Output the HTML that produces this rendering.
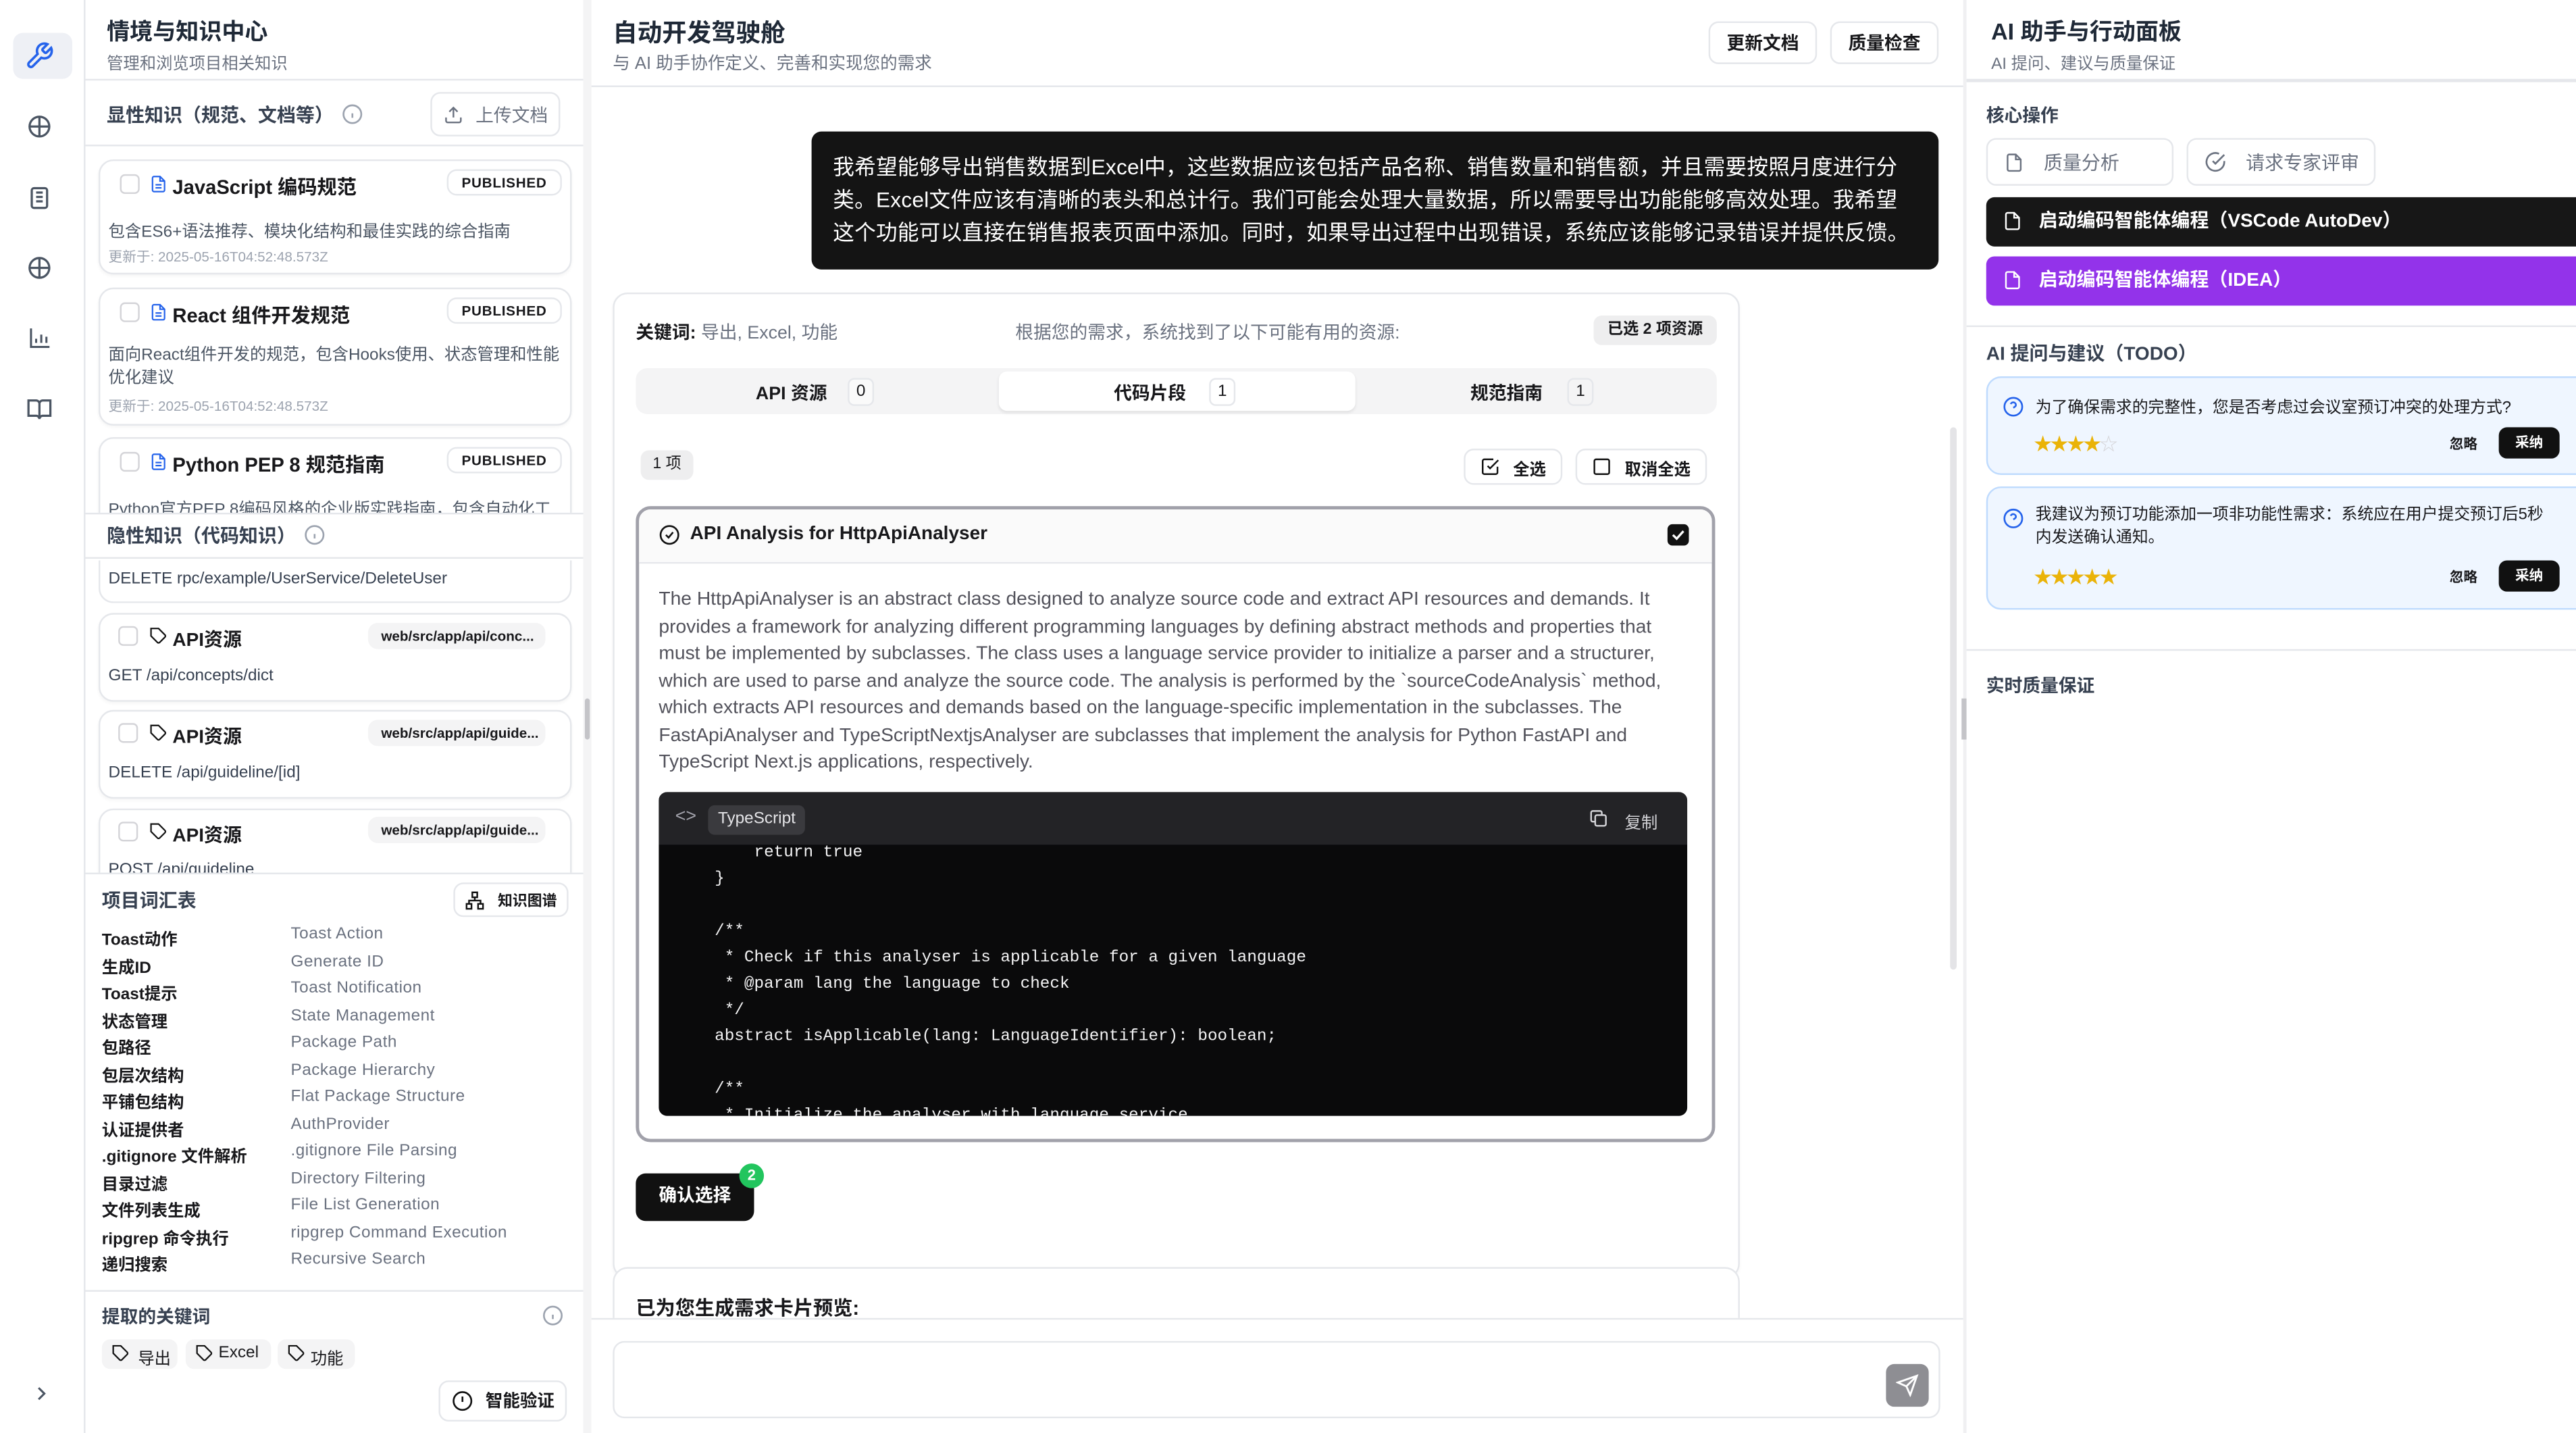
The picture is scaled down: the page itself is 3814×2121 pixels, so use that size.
<!DOCTYPE html>
<html><head><meta charset="utf-8">
<style>
*{box-sizing:border-box;margin:0;padding:0}
html,body{width:3814px;height:2120px;overflow:hidden;background:#fff}
#w{position:absolute;left:0;top:0;width:1568px;height:872px;transform:scale(2.43240);transform-origin:0 0;font-family:"Liberation Sans","Noto Sans CJK SC",sans-serif;color:#18181b;overflow:hidden}
.a{position:absolute}
.t{white-space:nowrap}
.b{font-weight:700}
.g{color:#6b7280}
.card{position:absolute;border:1px solid #e5e7eb;border-radius:9px;background:#fff;box-shadow:0 1px 2px rgba(0,0,0,.04)}
.btn{position:absolute;border:1px solid #e5e7eb;border-radius:6px;background:#fff;font-size:11px;display:flex;align-items:center;justify-content:center;gap:8px;white-space:nowrap}
.cb{position:absolute;width:12px;height:12px;border:1px solid #d4d4d8;border-radius:3px;background:#fff}
.pub{position:absolute;border:1px solid #e5e7eb;border-radius:6px;font-size:8.5px;font-weight:700;padding:2px 8px;letter-spacing:.3px}
.path{position:absolute;background:#f4f4f5;border-radius:6px;font-size:8.5px;font-weight:700;padding:3px 8px;width:108px;white-space:nowrap;overflow:hidden}
.hl{position:absolute;height:1px;background:#e5e7eb}
svg{position:absolute}
.row{position:absolute;left:62px;font-size:10px;white-space:nowrap}
.row span{position:absolute;left:115px;color:#6b7280;letter-spacing:.2px}
pre{font-family:"Liberation Mono",monospace;font-size:10px;line-height:16px;color:#f4f4f5}
</style></head><body><div id="w">

<!-- icon rail -->
<div class="a" style="left:0;top:0;width:52px;height:872px;background:#fff;border-right:1px solid #e5e7eb"></div>
<div class="a" style="left:8px;top:20px;width:36px;height:28px;border-radius:6px;background:#eef0f5"></div>
<svg style="left:15px;top:25px" width="18" height="18" viewBox="0 0 24 24" fill="none" stroke="#2563eb" stroke-width="2" stroke-linecap="round"><path d="M14.7 6.3a1 1 0 000 1.4l1.6 1.6a1 1 0 001.4 0l3.77-3.77a6 6 0 01-7.940 7.94l-6.91 6.91a2.12 2.12 0 01-3-3l6.91-6.91a6 6 0 017.94-7.94l-3.76 3.76z"/></svg>
<svg style="left:16px;top:69px" width="16" height="16" viewBox="0 0 24 24" fill="none" stroke="#4b5563" stroke-width="2"><circle cx="12" cy="12" r="9"/><path d="M12 3v18M3 12h18"/></svg>
<svg style="left:16px;top:112px" width="16" height="17" viewBox="0 0 24 24" fill="none" stroke="#4b5563" stroke-width="2"><rect x="5" y="3" width="14" height="18" rx="2"/><path d="M9 7h6M9 11h6M9 15h6"/></svg>
<svg style="left:16px;top:155px" width="16" height="16" viewBox="0 0 24 24" fill="none" stroke="#4b5563" stroke-width="2"><circle cx="12" cy="12" r="9"/><path d="M12 3v18M3 12h18"/></svg>
<svg style="left:17px;top:198px" width="15" height="15" viewBox="0 0 24 24" fill="none" stroke="#4b5563" stroke-width="2"><path d="M3 3v18h18M8 17v-4M13 17V9M18 17v-6"/></svg>
<svg style="left:16px;top:241px" width="16" height="16" viewBox="0 0 24 24" fill="none" stroke="#4b5563" stroke-width="2"><path d="M2 4h7a3 3 0 013 3v14a3 3 0 00-3-3H2zM22 4h-7a3 3 0 00-3 3v14a3 3 0 013-3h7z"/></svg>
<svg style="left:19px;top:842px" width="12" height="12" viewBox="0 0 24 24" fill="none" stroke="#4b5563" stroke-width="2.5"><path d="M9 5l7 7-7 7"/></svg>

<!-- left panel -->
<div class="a" style="left:355px;top:0;width:5px;height:872px;background:#f4f4f5"></div>
<div class="a" style="left:356px;top:425px;width:3px;height:25px;background:#c4c4c8;border-radius:2px"></div>
<div class="a t b" style="left:65px;top:9px;font-size:14px;color:#1f2937">情境与知识中心</div>
<div class="a t g" style="left:65px;top:30px;font-size:10px">管理和浏览项目相关知识</div>
<div class="hl" style="left:52px;top:48px;width:303px"></div>
<div class="a t b" style="left:65px;top:62px;font-size:11.5px;color:#374151">显性知识（规范、文档等）</div>
<svg style="left:208px;top:63px" width="13" height="13" viewBox="0 0 24 24" fill="none" stroke="#9ca3af" stroke-width="2"><circle cx="12" cy="12" r="10"/><path d="M12 16v-5M12 8h.01"/></svg>
<div class="btn" style="left:262px;top:56px;width:79px;height:27px;color:#6b7280"><svg style="position:static" width="12" height="12" viewBox="0 0 24 24" fill="none" stroke="#6b7280" stroke-width="2"><path d="M21 15v4a2 2 0 01-2 2H5a2 2 0 01-2-2v-4M17 8l-5-5-5 5M12 3v12"/></svg>上传文档</div>
<div class="hl" style="left:52px;top:88px;width:303px"></div>

<div class="card" style="left:60px;top:97px;width:288px;height:70px"></div>
<div class="cb" style="left:73px;top:106px"></div>
<svg style="left:91px;top:106px" width="11" height="12" viewBox="0 0 24 24" fill="none" stroke="#2563eb" stroke-width="2"><path d="M14 2H6a2 2 0 00-2 2v16a2 2 0 002 2h12a2 2 0 002-2V8zM14 2v6h6M8 13h8M8 17h8"/></svg>
<div class="a t b" style="left:105px;top:105px;font-size:12px">JavaScript 编码规范</div>
<div class="pub" style="left:272px;top:103px">PUBLISHED</div>
<div class="a t" style="left:66px;top:132px;font-size:10px;color:#4b5563">包含ES6+语法推荐、模块化结构和最佳实践的综合指南</div>
<div class="a t" style="left:66px;top:150px;font-size:8.5px;color:#9ca3af">更新于: 2025-05-16T04:52:48.573Z</div>

<div class="card" style="left:60px;top:175px;width:288px;height:84px"></div>
<div class="cb" style="left:73px;top:184px"></div>
<svg style="left:91px;top:184px" width="11" height="12" viewBox="0 0 24 24" fill="none" stroke="#2563eb" stroke-width="2"><path d="M14 2H6a2 2 0 00-2 2v16a2 2 0 002 2h12a2 2 0 002-2V8zM14 2v6h6M8 13h8M8 17h8"/></svg>
<div class="a t b" style="left:105px;top:183px;font-size:12px">React 组件开发规范</div>
<div class="pub" style="left:272px;top:181px">PUBLISHED</div>
<div class="a" style="left:66px;top:210px;width:280px;font-size:10px;line-height:14px;color:#4b5563">面向React组件开发的规范，包含Hooks使用、状态管理和性能优化建议</div>
<div class="a t" style="left:66px;top:241px;font-size:8.5px;color:#9ca3af">更新于: 2025-05-16T04:52:48.573Z</div>

<div class="card" style="left:60px;top:266px;width:288px;height:70px"></div>
<div class="cb" style="left:73px;top:275px"></div>
<svg style="left:91px;top:275px" width="11" height="12" viewBox="0 0 24 24" fill="none" stroke="#2563eb" stroke-width="2"><path d="M14 2H6a2 2 0 00-2 2v16a2 2 0 002 2h12a2 2 0 002-2V8zM14 2v6h6M8 13h8M8 17h8"/></svg>
<div class="a t b" style="left:105px;top:274px;font-size:12px">Python PEP 8 规范指南</div>
<div class="pub" style="left:272px;top:272px">PUBLISHED</div>
<div class="a t" style="left:66px;top:301px;font-size:10px;color:#4b5563">Python官方PEP 8编码风格的企业版实践指南，包含自动化工</div>

<div class="a" style="left:52px;top:312px;width:303px;height:28px;background:#fff;border-top:1px solid #e5e7eb;border-bottom:1px solid #e5e7eb"></div>
<div class="a t b" style="left:65px;top:318px;font-size:11.5px;color:#374151">隐性知识（代码知识）</div>
<svg style="left:185px;top:319px" width="13" height="13" viewBox="0 0 24 24" fill="none" stroke="#9ca3af" stroke-width="2"><circle cx="12" cy="12" r="10"/><path d="M12 16v-5M12 8h.01"/></svg>

<div class="a" style="left:60px;top:341px;width:288px;height:26px;border:1px solid #e5e7eb;border-top:none;border-radius:0 0 9px 9px"></div>
<div class="a t" style="left:66px;top:347px;font-size:10px;color:#374151">DELETE rpc/example/UserService/DeleteUser</div>

<div class="card" style="left:60px;top:373px;width:288px;height:54px"></div>
<div class="cb" style="left:72px;top:381px"></div>
<svg style="left:91px;top:381px" width="11" height="12" viewBox="0 0 24 24" fill="none" stroke="#111" stroke-width="2"><path d="M20.6 13.4l-7.2 7.2a2 2 0 01-2.8 0L2 12V2h10l8.6 8.6a2 2 0 010 2.8zM7 7h.01"/></svg>
<div class="a t b" style="left:105px;top:381px;font-size:11.5px">API资源</div>
<div class="path" style="left:224px;top:379px">web/src/app/api/conc...</div>
<div class="a t" style="left:66px;top:406px;font-size:10px;color:#374151">GET /api/concepts/dict</div>

<div class="card" style="left:60px;top:432px;width:288px;height:54px"></div>
<div class="cb" style="left:72px;top:440px"></div>
<svg style="left:91px;top:440px" width="11" height="12" viewBox="0 0 24 24" fill="none" stroke="#111" stroke-width="2"><path d="M20.6 13.4l-7.2 7.2a2 2 0 01-2.8 0L2 12V2h10l8.6 8.6a2 2 0 010 2.8zM7 7h.01"/></svg>
<div class="a t b" style="left:105px;top:440px;font-size:11.5px">API资源</div>
<div class="path" style="left:224px;top:438px">web/src/app/api/guide...</div>
<div class="a t" style="left:66px;top:465px;font-size:10px;color:#374151">DELETE /api/guideline/[id]</div>

<div class="card" style="left:60px;top:492px;width:288px;height:54px"></div>
<div class="cb" style="left:72px;top:500px"></div>
<svg style="left:91px;top:500px" width="11" height="12" viewBox="0 0 24 24" fill="none" stroke="#111" stroke-width="2"><path d="M20.6 13.4l-7.2 7.2a2 2 0 01-2.8 0L2 12V2h10l8.6 8.6a2 2 0 010 2.8zM7 7h.01"/></svg>
<div class="a t b" style="left:105px;top:500px;font-size:11.5px">API资源</div>
<div class="path" style="left:224px;top:497px">web/src/app/api/guide...</div>
<div class="a t" style="left:66px;top:524px;font-size:10px;color:#374151">POST /api/guideline</div>

<div class="a" style="left:52px;top:531px;width:303px;height:341px;background:#fff;border-top:1px solid #e5e7eb"></div>
<div class="a t b" style="left:62px;top:540px;font-size:11.5px;color:#374151">项目词汇表</div>
<div class="btn" style="left:276px;top:537px;width:70px;height:21px;font-size:9px;font-weight:700"><svg style="position:static" width="12" height="12" viewBox="0 0 24 24" fill="none" stroke="#111" stroke-width="2"><rect x="9" y="2" width="6" height="6"/><rect x="2" y="16" width="6" height="6"/><rect x="16" y="16" width="6" height="6"/><path d="M5 16v-4h14v4M12 12V8"/></svg>知识图谱</div>
<div class="row b" style="top:563px">Toast动作<span style="font-weight:400">Toast Action</span></div>
<div class="row b" style="top:579.5px">生成ID<span style="font-weight:400">Generate ID</span></div>
<div class="row b" style="top:596px">Toast提示<span style="font-weight:400">Toast Notification</span></div>
<div class="row b" style="top:612.5px">状态管理<span style="font-weight:400">State Management</span></div>
<div class="row b" style="top:629px">包路径<span style="font-weight:400">Package Path</span></div>
<div class="row b" style="top:645.5px">包层次结构<span style="font-weight:400">Package Hierarchy</span></div>
<div class="row b" style="top:662px">平铺包结构<span style="font-weight:400">Flat Package Structure</span></div>
<div class="row b" style="top:678.5px">认证提供者<span style="font-weight:400">AuthProvider</span></div>
<div class="row b" style="top:695px">.gitignore 文件解析<span style="font-weight:400">.gitignore File Parsing</span></div>
<div class="row b" style="top:711.5px">目录过滤<span style="font-weight:400">Directory Filtering</span></div>
<div class="row b" style="top:728px">文件列表生成<span style="font-weight:400">File List Generation</span></div>
<div class="row b" style="top:744.5px">ripgrep 命令执行<span style="font-weight:400">ripgrep Command Execution</span></div>
<div class="row b" style="top:761px">递归搜索<span style="font-weight:400">Recursive Search</span></div>
<div class="hl" style="left:52px;top:785px;width:303px"></div>
<div class="a t b" style="left:62px;top:793px;font-size:11px;color:#374151">提取的关键词</div>
<svg style="left:330px;top:794px" width="13" height="13" viewBox="0 0 24 24" fill="none" stroke="#9ca3af" stroke-width="2"><circle cx="12" cy="12" r="10"/><path d="M12 16v-5M12 8h.01"/></svg>
<div class="a t" style="left:62px;top:815px;width:46px;height:18px;background:#f4f4f5;border-radius:5px;font-size:10px;padding:3px 0 0 22px">导出</div>
<div class="a t" style="left:113px;top:815px;width:52px;height:18px;background:#f4f4f5;border-radius:5px;font-size:10px;padding:3px 0 0 20px">Excel</div>
<div class="a t" style="left:169px;top:815px;width:47px;height:18px;background:#f4f4f5;border-radius:5px;font-size:10px;padding:3px 0 0 20px">功能</div>
<svg style="left:68px;top:818px" width="11" height="11" viewBox="0 0 24 24" fill="none" stroke="#111" stroke-width="2"><path d="M20.6 13.4l-7.2 7.2a2 2 0 01-2.8 0L2 12V2h10l8.6 8.6a2 2 0 010 2.8zM7 7h.01"/></svg>
<svg style="left:119px;top:818px" width="11" height="11" viewBox="0 0 24 24" fill="none" stroke="#111" stroke-width="2"><path d="M20.6 13.4l-7.2 7.2a2 2 0 01-2.8 0L2 12V2h10l8.6 8.6a2 2 0 010 2.8zM7 7h.01"/></svg>
<svg style="left:175px;top:818px" width="11" height="11" viewBox="0 0 24 24" fill="none" stroke="#111" stroke-width="2"><path d="M20.6 13.4l-7.2 7.2a2 2 0 01-2.8 0L2 12V2h10l8.6 8.6a2 2 0 010 2.8zM7 7h.01"/></svg>
<div class="btn" style="left:267px;top:840px;width:78px;height:25px;font-size:10.5px;font-weight:700"><svg style="position:static" width="13" height="13" viewBox="0 0 24 24" fill="none" stroke="#111" stroke-width="2"><circle cx="12" cy="12" r="10"/><path d="M12 7v6M12 16.5h.01"/></svg>智能验证</div>

<!-- middle -->
<div class="a t b" style="left:373px;top:9px;font-size:15px;color:#1f2937">自动开发驾驶舱</div>
<div class="a t g" style="left:373px;top:31px;font-size:10.5px">与 AI 助手协作定义、完善和实现您的需求</div>
<div class="btn" style="left:1040px;top:13px;width:66px;height:26px;font-weight:700">更新文档</div>
<div class="btn" style="left:1114px;top:13px;width:66px;height:26px;font-weight:700">质量检查</div>
<div class="hl" style="left:360px;top:52px;width:835px"></div>
<div class="a" style="left:1187px;top:260px;width:4px;height:330px;background:#e4e4e7;border-radius:2px"></div>
<div class="a" style="left:1195px;top:0;width:2px;height:872px;background:#f0f0f2"></div>
<div class="a" style="left:1194px;top:425px;width:3px;height:25px;background:#c4c4c8"></div>

<div class="a" style="left:494px;top:80px;width:686px;height:84px;background:#141414;border-radius:6px;color:#fff;font-size:13px;line-height:20px;padding:12px 12px 0 13px;letter-spacing:.1px">我希望能够导出销售数据到Excel中，这些数据应该包括产品名称、销售数量和销售额，并且需要按照月度进行分类。Excel文件应该有清晰的表头和总计行。我们可能会处理大量数据，所以需要导出功能能够高效处理。我希望这个功能可以直接在销售报表页面中添加。同时，如果导出过程中出现错误，系统应该能够记录错误并提供反馈。</div>

<div class="card" style="left:373px;top:178px;width:686px;height:600px"></div>
<div class="a t" style="left:387px;top:194px;font-size:11px"><b>关键词:</b> <span class="g">导出, Excel, 功能</span></div>
<div class="a t g" style="left:618px;top:194px;font-size:11px">根据您的需求，系统找到了以下可能有用的资源:</div>
<div class="a t b" style="left:970px;top:192px;width:75px;height:18px;background:#eeeeef;border-radius:5px;font-size:9.5px;text-align:center;line-height:18px">已选 2 项资源</div>
<div class="a" style="left:387px;top:224px;width:658px;height:28px;background:#f4f4f5;border-radius:7px"></div>
<div class="a" style="left:608px;top:226px;width:217px;height:24px;background:#fff;border-radius:5px;box-shadow:0 1px 2px rgba(0,0,0,.08)"></div>
<div class="a t b" style="left:460px;top:231px;font-size:11px">API 资源</div>
<div class="a t" style="left:516px;top:230px;width:16px;height:17px;border:1px solid #e5e7eb;border-radius:4px;font-size:10px;text-align:center;line-height:15px;background:#fafafa">0</div>
<div class="a t b" style="left:678px;top:231px;font-size:11px">代码片段</div>
<div class="a t" style="left:736px;top:230px;width:16px;height:17px;border:1px solid #e5e7eb;border-radius:4px;font-size:10px;text-align:center;line-height:15px">1</div>
<div class="a t b" style="left:895px;top:231px;font-size:11px">规范指南</div>
<div class="a t" style="left:954px;top:230px;width:16px;height:17px;border:1px solid #e5e7eb;border-radius:4px;font-size:10px;text-align:center;line-height:15px">1</div>

<div class="a t" style="left:390px;top:274px;width:32px;height:18px;background:#eeeeef;border-radius:5px;font-size:9.5px;text-align:center;line-height:18px">1 项</div>
<div class="btn" style="left:891px;top:273px;width:60px;height:22px;font-size:10px;font-weight:700"><svg style="position:static" width="12" height="12" viewBox="0 0 24 24" fill="none" stroke="#111" stroke-width="2"><path d="M9 11l3 3L22 4M21 12v7a2 2 0 01-2 2H5a2 2 0 01-2-2V5a2 2 0 012-2h11"/></svg>全选</div>
<div class="btn" style="left:959px;top:273px;width:80px;height:22px;font-size:10px;font-weight:700"><svg style="position:static" width="12" height="12" viewBox="0 0 24 24" fill="none" stroke="#111" stroke-width="2"><rect x="3" y="3" width="18" height="18" rx="2"/></svg>取消全选</div>

<div class="a" style="left:387px;top:308px;width:657px;height:387px;border:2px solid #a1a1aa;border-radius:9px;background:#fff"></div>
<div class="a" style="left:389px;top:310px;width:653px;height:33px;background:#fafafa;border-bottom:1px solid #e5e7eb;border-radius:7px 7px 0 0"></div>
<svg style="left:401px;top:319px" width="13" height="13" viewBox="0 0 24 24" fill="none" stroke="#111" stroke-width="2"><circle cx="12" cy="12" r="10"/><path d="M8 12l3 3 5-6"/></svg>
<div class="a t" style="left:420px;top:319px;font-size:11.5px;font-weight:600">API Analysis for HttpApiAnalyser</div>
<div class="a" style="left:1015px;top:319px;width:13px;height:13px;background:#111;border-radius:3px"></div>
<svg style="left:1016px;top:320px" width="11" height="11" viewBox="0 0 24 24" fill="none" stroke="#fff" stroke-width="3"><path d="M5 12l5 5 9-10"/></svg>
<div class="a" style="left:401px;top:357px;width:623px;font-size:11.6px;line-height:16.5px;color:#52525b">The HttpApiAnalyser is an abstract class designed to analyze source code and extract API resources and demands. It provides a framework for analyzing different programming languages by defining abstract methods and properties that must be implemented by subclasses. The class uses a language service provider to initialize a parser and a structurer, which are used to parse and analyze the source code. The analysis is performed by the `sourceCodeAnalysis` method, which extracts API resources and demands based on the language-specific implementation in the subclasses. The FastApiAnalyser and TypeScriptNextjsAnalyser are subclasses that implement the analysis for Python FastAPI and TypeScript Next.js applications, respectively.</div>

<div class="a" style="left:401px;top:482px;width:626px;height:197px;background:#0a0a0b;border-radius:5px;overflow:hidden">
 <div class="a" style="left:0;top:0;width:626px;height:32px;background:#232326"></div>
 <div class="a t" style="left:10px;top:9px;font-size:11px;color:#a1a1aa">&lt;&gt;</div>
 <div class="a t" style="left:30px;top:8px;height:18px;padding:0 6px;background:#3a3a3e;border-radius:4px;font-size:10px;color:#e4e4e7;line-height:18px">TypeScript</div>
 <svg style="left:566px;top:10px" width="12" height="12" viewBox="0 0 24 24" fill="none" stroke="#d4d4d8" stroke-width="2"><rect x="8" y="8" width="13" height="13" rx="2"/><path d="M16 8V5a2 2 0 00-2-2H5a2 2 0 00-2 2v9a2 2 0 002 2h3"/></svg>
 <div class="a t" style="left:588px;top:10px;font-size:10px;color:#d4d4d8">复制</div>
 <pre class="a" style="left:10px;top:30px">        return true
    }

    /**
     * Check if this analyser is applicable for a given language
     * @param lang the language to check
     */
    abstract isApplicable(lang: LanguageIdentifier): boolean;

    /**
     * Initialize the analyser with language service</pre>
</div>

<div class="a t b" style="left:387px;top:714px;width:72px;height:29px;background:#111;border-radius:6px;color:#fff;font-size:11px;text-align:center;line-height:29px">确认选择</div>
<div class="a t b" style="left:450px;top:708px;width:15px;height:15px;background:#22c55e;border-radius:50%;color:#fff;font-size:9px;text-align:center;line-height:15px">2</div>

<div class="a" style="left:373px;top:771px;width:686px;height:40px;border:1px solid #e5e7eb;border-radius:9px;background:#fff"></div>
<div class="a t" style="left:387px;top:787px;font-size:12px;font-weight:600">已为您生成需求卡片预览:</div>
<div class="a" style="left:360px;top:802px;width:835px;height:70px;background:#fff;border-top:1px solid #e5e7eb"></div>
<div class="a" style="left:373px;top:816px;width:808px;height:47px;border:1px solid #e5e7eb;border-radius:7px"></div>
<div class="a" style="left:1148px;top:830px;width:26px;height:26px;background:#8e8e93;border-radius:5px"></div>
<svg style="left:1154px;top:836px" width="14" height="14" viewBox="0 0 24 24" fill="none" stroke="#fff" stroke-width="2"><path d="M22 2L11 13M22 2l-7 20-4-9-9-4z"/></svg>

<!-- right -->
<div class="a t b" style="left:1212px;top:9px;font-size:14px;color:#1f2937">AI 助手与行动面板</div>
<div class="a t g" style="left:1212px;top:30px;font-size:10px">AI 提问、建议与质量保证</div>
<div class="hl" style="left:1197px;top:48px;width:371px;height:2px"></div>
<div class="a t b" style="left:1209px;top:62px;font-size:11px;color:#374151">核心操作</div>
<div class="btn" style="left:1209px;top:84px;width:114px;height:29px;color:#6b7280;justify-content:flex-start;padding-left:10px;gap:12px;font-size:11.5px"><svg style="position:static" width="12" height="12" viewBox="0 0 24 24" fill="none" stroke="#6b7280" stroke-width="2"><path d="M14 2H6a2 2 0 00-2 2v16a2 2 0 002 2h12a2 2 0 002-2V8zM14 2v6h6"/></svg>质量分析</div>
<div class="btn" style="left:1331px;top:84px;width:115px;height:29px;color:#6b7280;justify-content:flex-start;padding-left:10px;gap:12px;font-size:11.5px"><svg style="position:static" width="13" height="13" viewBox="0 0 24 24" fill="none" stroke="#6b7280" stroke-width="2"><path d="M22 11.1V12a10 10 0 11-5.9-9.1M22 4L12 14l-3-3"/></svg>请求专家评审</div>
<div class="a t b" style="left:1209px;top:120px;width:370px;height:30px;background:#171717;border-radius:5px;color:#fff;font-size:11.5px;line-height:30px;padding-left:32px">启动编码智能体编程（VSCode AutoDev）</div>
<div class="a t b" style="left:1209px;top:156px;width:370px;height:30px;background:#9333ea;border-radius:5px;color:#fff;font-size:11.5px;line-height:30px;padding-left:32px">启动编码智能体编程（IDEA）</div>
<svg style="left:1219px;top:128px" width="12" height="13" viewBox="0 0 24 24" fill="none" stroke="#fff" stroke-width="2"><path d="M14 2H6a2 2 0 00-2 2v16a2 2 0 002 2h12a2 2 0 002-2V8zM14 2v6h6"/></svg>
<svg style="left:1219px;top:164px" width="12" height="13" viewBox="0 0 24 24" fill="none" stroke="#fff" stroke-width="2"><path d="M14 2H6a2 2 0 00-2 2v16a2 2 0 002 2h12a2 2 0 002-2V8zM14 2v6h6"/></svg>
<div class="hl" style="left:1197px;top:198px;width:371px"></div>
<div class="a t" style="left:1209px;top:207px;font-size:11.5px;font-weight:600;color:#374151">AI 提问与建议（TODO）</div>
<div class="a" style="left:1209px;top:229px;width:370px;height:60px;background:#eff6ff;border:1px solid #bfdbfe;border-radius:9px"></div>
<svg style="left:1219px;top:241px" width="13" height="13" viewBox="0 0 24 24" fill="none" stroke="#2563eb" stroke-width="2"><circle cx="12" cy="12" r="10"/><path d="M9.1 9a3 3 0 015.8 1c0 2-3 3-3 3M12 17h.01"/></svg>
<div class="a t" style="left:1239px;top:240px;font-size:9.8px">为了确保需求的完整性，您是否考虑过会议室预订冲突的处理方式?</div>
<div class="a t" style="left:1238px;top:262px;font-size:11px;color:#eab308;letter-spacing:-1px">★★★★<span style="color:#d4d4d8">☆</span></div>
<div class="a t b" style="left:1491px;top:264px;font-size:8.5px">忽略</div>
<div class="a t b" style="left:1521px;top:260px;width:37px;height:19px;background:#111;border-radius:5px;color:#fff;font-size:8.5px;text-align:center;line-height:19px">采纳</div>
<div class="a" style="left:1209px;top:296px;width:370px;height:75px;background:#eff6ff;border:1px solid #bfdbfe;border-radius:9px"></div>
<svg style="left:1219px;top:309px" width="13" height="13" viewBox="0 0 24 24" fill="none" stroke="#2563eb" stroke-width="2"><circle cx="12" cy="12" r="10"/><path d="M9.1 9a3 3 0 015.8 1c0 2-3 3-3 3M12 17h.01"/></svg>
<div class="a" style="left:1239px;top:307px;width:318px;font-size:9.8px;line-height:14px">我建议为预订功能添加一项非功能性需求：系统应在用户提交预订后5秒内发送确认通知。</div>
<div class="a t" style="left:1238px;top:343px;font-size:11px;color:#eab308;letter-spacing:-1px">★★★★★</div>
<div class="a t b" style="left:1491px;top:345px;font-size:8.5px">忽略</div>
<div class="a t b" style="left:1521px;top:341px;width:37px;height:19px;background:#111;border-radius:5px;color:#fff;font-size:8.5px;text-align:center;line-height:19px">采纳</div>
<div class="hl" style="left:1197px;top:395px;width:371px"></div>
<div class="a t" style="left:1209px;top:409px;font-size:11px;font-weight:600;color:#374151">实时质量保证</div>

</div></body></html>
